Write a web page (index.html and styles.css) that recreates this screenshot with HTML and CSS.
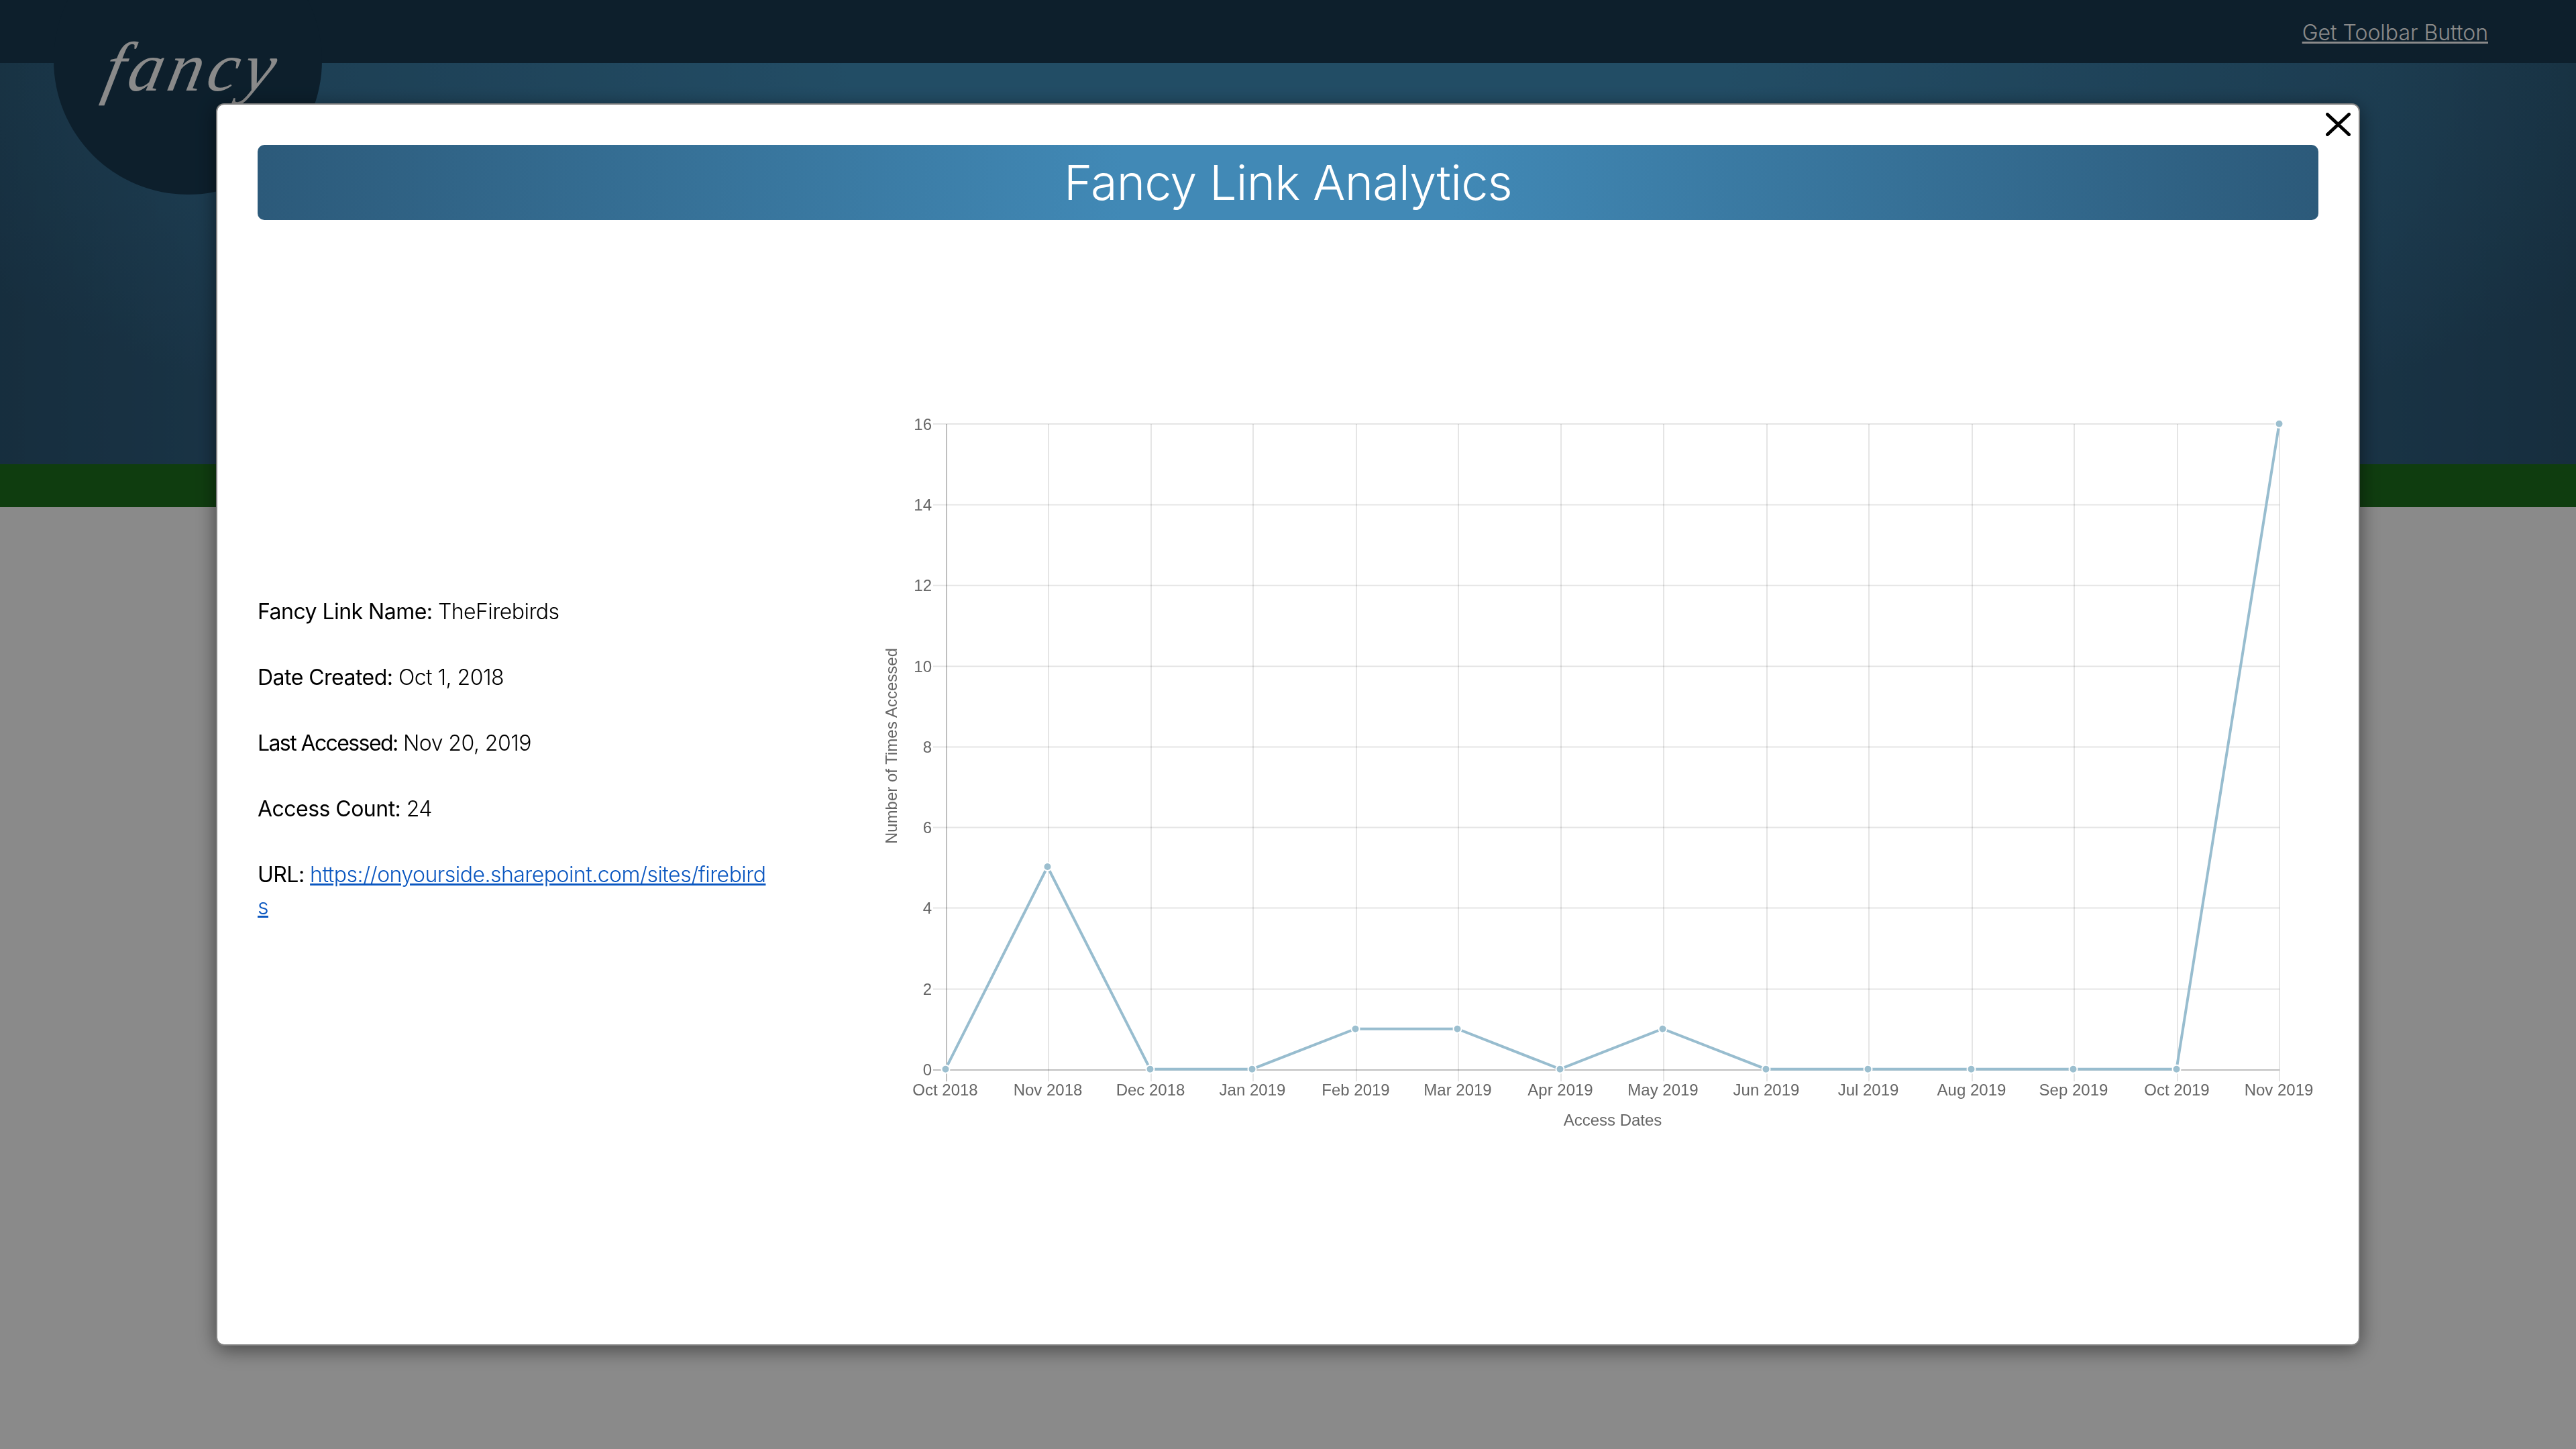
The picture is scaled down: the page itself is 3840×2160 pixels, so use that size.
FILE: index.html

```html
<!DOCTYPE html>
<html lang="en">
<head>
  <meta charset="UTF-8" />
  <meta name="viewport" content="width=device-width, initial-scale=1.0"/>
  <title>Fancy Link Analytics</title>
  <link rel="stylesheet" href="styles.css">
</head>
<body>
  <header class="topbar">
    <div class="logo-circle"><span class="logo-text">fancy</span></div>
    <a class="toolbar-link" href="#">Get Toolbar Button</a>
  </header>
  <section class="hero"></section>
  <div class="green-band"></div>
  <main class="page-content"></main>

  <div class="overlay"></div>

  <div class="modal">
    <button class="close-btn" aria-label="Close">
      <svg viewBox="0 0 37 35" width="37" height="35">
        <line x1="2.5" y1="2.5" x2="34.5" y2="32.5"/>
        <line x1="34.5" y1="2.5" x2="2.5" y2="32.5"/>
      </svg>
    </button>
    <h1 class="modal-title">Fancy Link Analytics</h1>
    <div class="modal-body">
      <div class="info">
        <p><span class="label">Fancy Link Name:</span> TheFirebirds</p>
        <p><span class="label">Date Created:</span> Oct 1, 2018</p>
        <p><span class="label label-tight">Last Accessed:</span> Nov 20, 2019</p>
        <p><span class="label">Access Count:</span> 24</p>
        <p><span class="label">URL:</span> <a href="#">https://onyourside.sharepoint.com/sites/firebirds</a></p>
      </div>

      <!-- viewBox uses page coordinates so the numbers read the same as the screen -->
      <svg class="chart" viewBox="1300 610 2156 1078" width="2156" height="1078">
        <g class="grid">
          <line x1="1391" y1="632" x2="3398" y2="632"/>
          <line x1="1391" y1="752.4" x2="3398" y2="752.4"/>
          <line x1="1391" y1="872.8" x2="3398" y2="872.8"/>
          <line x1="1391" y1="993.2" x2="3398" y2="993.2"/>
          <line x1="1391" y1="1113.6" x2="3398" y2="1113.6"/>
          <line x1="1391" y1="1233.6" x2="3398" y2="1233.6"/>
          <line x1="1391" y1="1353.6" x2="3398" y2="1353.6"/>
          <line x1="1391" y1="1474.6" x2="3398" y2="1474.6"/>
          <line x1="1563" y1="632" x2="1563" y2="1612"/>
          <line x1="1716" y1="632" x2="1716" y2="1612"/>
          <line x1="1868" y1="632" x2="1868" y2="1612"/>
          <line x1="2022" y1="632" x2="2022" y2="1612"/>
          <line x1="2174" y1="632" x2="2174" y2="1612"/>
          <line x1="2327" y1="632" x2="2327" y2="1612"/>
          <line x1="2480" y1="632" x2="2480" y2="1612"/>
          <line x1="2634" y1="632" x2="2634" y2="1612"/>
          <line x1="2786" y1="632" x2="2786" y2="1612"/>
          <line x1="2940" y1="632" x2="2940" y2="1612"/>
          <line x1="3092" y1="632" x2="3092" y2="1612"/>
          <line x1="3246" y1="632" x2="3246" y2="1612"/>
          <line x1="3398" y1="632" x2="3398" y2="1612"/>
        </g>
        <g class="axis">
          <line x1="1411" y1="632" x2="1411" y2="1612"/>
          <line x1="1391" y1="1595" x2="3398" y2="1595"/>
        </g>
        <g class="ticks-y">
          <text x="1389" y="632">16</text>
          <text x="1389" y="752">14</text>
          <text x="1389" y="872">12</text>
          <text x="1389" y="993">10</text>
          <text x="1389" y="1113">8</text>
          <text x="1389" y="1233">6</text>
          <text x="1389" y="1353">4</text>
          <text x="1389" y="1474">2</text>
          <text x="1389" y="1594">0</text>
        </g>
        <g class="ticks-x">
          <text x="1409" y="1624">Oct 2018</text>
          <text x="1562" y="1624">Nov 2018</text>
          <text x="1715" y="1624">Dec 2018</text>
          <text x="1867" y="1624">Jan 2019</text>
          <text x="2021" y="1624">Feb 2019</text>
          <text x="2173" y="1624">Mar 2019</text>
          <text x="2326" y="1624">Apr 2019</text>
          <text x="2479" y="1624">May 2019</text>
          <text x="2633" y="1624">Jun 2019</text>
          <text x="2785" y="1624">Jul 2019</text>
          <text x="2939" y="1624">Aug 2019</text>
          <text x="3091" y="1624">Sep 2019</text>
          <text x="3245" y="1624">Oct 2019</text>
          <text x="3397" y="1624">Nov 2019</text>
        </g>
        <text class="axis-title" x="2404" y="1678">Access Dates</text>
        <text class="axis-title" transform="translate(1337 1112) rotate(-90)">Number of Times Accessed</text>
        <polyline class="data-line" points="1409.5,1593.7 1561.5,1292 1714.5,1593.7 1866.5,1593.7 2020.5,1533.7 2172.5,1533.7 2325.5,1593.7 2478.5,1533.7 2632.5,1593.7 2784.5,1593.7 2938.5,1593.7 3090.5,1593.7 3244.5,1593.7 3397.5,631.7"/>
        <g class="data-points">
          <circle cx="1409.5" cy="1593.7" r="6"/>
          <circle cx="1561.5" cy="1292" r="6"/>
          <circle cx="1714.5" cy="1593.7" r="6"/>
          <circle cx="1866.5" cy="1593.7" r="6"/>
          <circle cx="2020.5" cy="1533.7" r="6"/>
          <circle cx="2172.5" cy="1533.7" r="6"/>
          <circle cx="2325.5" cy="1593.7" r="6"/>
          <circle cx="2478.5" cy="1533.7" r="6"/>
          <circle cx="2632.5" cy="1593.7" r="6"/>
          <circle cx="2784.5" cy="1593.7" r="6"/>
          <circle cx="2938.5" cy="1593.7" r="6"/>
          <circle cx="3090.5" cy="1593.7" r="6"/>
          <circle cx="3244.5" cy="1593.7" r="6"/>
          <circle cx="3397.5" cy="631.7" r="6"/>
        </g>
      </svg>
    </div>
  </div>
</body>
</html>
```

FILE: styles.css

```css
* {
  box-sizing: border-box;
}
html, body {
  height: 100%;
}
body {
  margin: 0;
  display: flex;
  flex-direction: column;
  overflow: hidden;
  background-color: #fff;
  font-family: Inter, 'Open Sans', sans-serif;
}
.topbar {
  flex: none;
  height: 94px;
  padding: 0 131px 0 0;
  display: flex;
  justify-content: flex-end;
  background-color: #183a52;
  position: relative;
  z-index: 2;
}
.logo-circle {
  position: absolute;
  left: 80px;
  top: -110px;
  width: 400px;
  height: 400px;
  border-radius: 50%;
  background-color: #183a52;
}
.logo-text {
  position: absolute;
  left: 78px;
  top: 158px;
  display: block;
  font-family: 'Liberation Serif', serif;
  font-style: italic;
  font-size: 104px;
  line-height: 1;
  letter-spacing: 7px;
  color: #fff;
  transform: skewX(-12deg);
}
.toolbar-link {
  margin-top: 29px;
  font-size: 32px;
  line-height: 40px;
  height: 40px;
  font-weight: 300;
  color: #fff;
}
.hero {
  flex: none;
  height: 598px;
  background:
    linear-gradient(to right, rgba(0, 0, 0, 0.1), transparent 8%, transparent 92%, rgba(0, 0, 0, 0.1)),
    radial-gradient(ellipse 2200px 700px at 50% 0, #408ebb 30%, #2f5f80 100%);
}
.green-band {
  flex: none;
  height: 64px;
  background-color: #1d711d;
}
.page-content {
  flex: 1;
}
.overlay {
  position: fixed;
  inset: 0;
  z-index: 5;
  background-color: rgba(0, 0, 0, 0.46);
}
.modal {
  position: fixed;
  left: 322px;
  top: 154px;
  z-index: 6;
  width: 3196px;
  height: 1852px;
  padding: 60px 60px 0;
  background-color: #fff;
  border: 2px solid #808080;
  border-radius: 12px;
  box-shadow: 0 6px 30px rgba(0, 0, 0, 0.5);
}
.close-btn {
  position: absolute;
  right: 12px;
  top: 12px;
  width: 37px;
  height: 35px;
  padding: 0;
  border: none;
  background: none;
  cursor: pointer;
}
.close-btn svg {
  display: block;
}
.close-btn line {
  stroke: #000;
  stroke-width: 5;
  stroke-linecap: round;
}
.modal-title {
  margin: 0;
  height: 112px;
  line-height: 112px;
  text-align: center;
  font-size: 72px;
  font-weight: 300;
  letter-spacing: -0.8px;
  color: #fff;
  border-radius: 10px;
  background: linear-gradient(to right, #2c5a7a, #4189b6 42%, #4189b6 58%, #2c5a7a);
}
.modal-body {
  display: flex;
  justify-content: space-between;
  align-items: flex-start;
}
.info {
  width: 762px;
  margin-top: 560px;
  font-size: 32px;
  line-height: 48px;
  font-weight: 300;
  letter-spacing: -0.53px;
  color: #000;
}
.info p {
  margin: 0 0 50px;
}
.info .label {
  font-weight: 400;
}
.info .label-tight {
  letter-spacing: -1.6px;
}
.info a {
  color: #0b57c0;
  word-break: break-all;
}
.chart {
  display: block;
  margin-top: 282px;
  flex: none;
}
.grid line {
  stroke: rgba(0, 0, 0, 0.1);
  stroke-width: 2;
}
.axis line {
  stroke: rgba(0, 0, 0, 0.25);
  stroke-width: 2;
}
.chart text {
  font-family: 'Liberation Sans', Arial, sans-serif;
  font-size: 24px;
  fill: #666;
}
.ticks-y text {
  text-anchor: end;
  dominant-baseline: central;
}
.ticks-x text {
  text-anchor: middle;
  dominant-baseline: central;
}
.chart .axis-title {
  text-anchor: middle;
}
.data-line {
  fill: none;
  stroke: #98bdcf;
  stroke-width: 4;
}
.data-points circle {
  fill: #9cbfcf;
  stroke: #fff;
  stroke-width: 2;
}
```
